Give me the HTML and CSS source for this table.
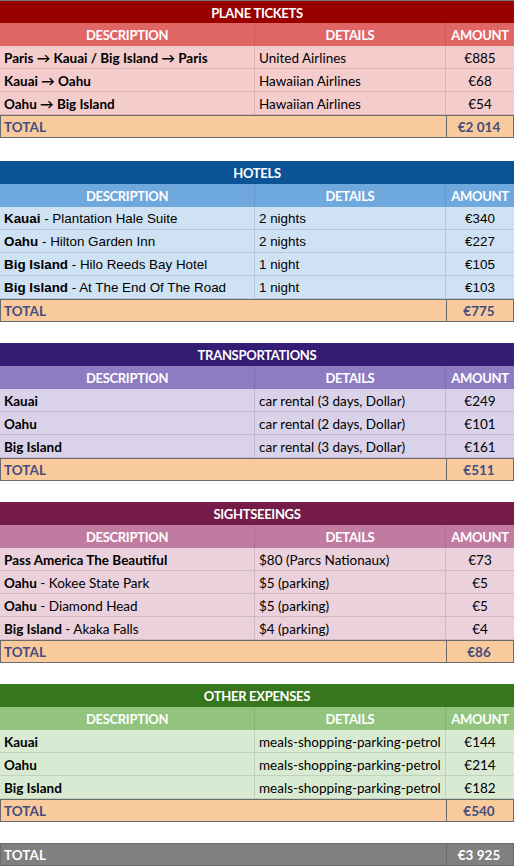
FILE: index.html
```html
<!DOCTYPE html>
<html>
<head>
<meta charset="utf-8">
<link rel="stylesheet" href="styles.css">
</head>
<body>
<main class="page">
  <section class="sheet plane">
    <div class="title">PLANE TICKETS</div>
    <div class="row head"><div class="c">DESCRIPTION</div><div class="c">DETAILS</div><div class="c">AMOUNT</div></div>
    <div class="row data"><div class="c"><b>Paris → Kauai / Big Island → Paris</b></div><div class="c">United Airlines</div><div class="c amt">€885</div></div>
    <div class="row data"><div class="c"><b>Kauai → Oahu</b></div><div class="c">Hawaiian Airlines</div><div class="c amt">€68</div></div>
    <div class="row data"><div class="c"><b>Oahu → Big Island</b></div><div class="c">Hawaiian Airlines</div><div class="c amt">€54</div></div>
    <div class="row total"><div class="c lbl">TOTAL</div><div class="c amt">€2 014</div></div>
  </section>

  <section class="sheet hotels">
    <div class="title">HOTELS</div>
    <div class="row head"><div class="c">DESCRIPTION</div><div class="c">DETAILS</div><div class="c">AMOUNT</div></div>
    <div class="row data arial"><div class="c"><b>Kauai</b> - Plantation Hale Suite</div><div class="c">2 nights</div><div class="c amt">€340</div></div>
    <div class="row data arial"><div class="c"><b>Oahu</b> - Hilton Garden Inn</div><div class="c">2 nights</div><div class="c amt">€227</div></div>
    <div class="row data arial"><div class="c"><b>Big Island</b> - Hilo Reeds Bay Hotel</div><div class="c">1 night</div><div class="c amt">€105</div></div>
    <div class="row data arial"><div class="c"><b>Big Island</b> - At The End Of The Road</div><div class="c">1 night</div><div class="c amt">€103</div></div>
    <div class="row total"><div class="c lbl">TOTAL</div><div class="c amt">€775</div></div>
  </section>

  <section class="sheet transport">
    <div class="title">TRANSPORTATIONS</div>
    <div class="row head"><div class="c">DESCRIPTION</div><div class="c">DETAILS</div><div class="c">AMOUNT</div></div>
    <div class="row data"><div class="c"><b>Kauai</b></div><div class="c">car rental (3 days, Dollar)</div><div class="c amt">€249</div></div>
    <div class="row data"><div class="c"><b>Oahu</b></div><div class="c">car rental (2 days, Dollar)</div><div class="c amt">€101</div></div>
    <div class="row data"><div class="c"><b>Big Island</b></div><div class="c">car rental (3 days, Dollar)</div><div class="c amt">€161</div></div>
    <div class="row total"><div class="c lbl">TOTAL</div><div class="c amt">€511</div></div>
  </section>

  <section class="sheet sight">
    <div class="title">SIGHTSEEINGS</div>
    <div class="row head"><div class="c">DESCRIPTION</div><div class="c">DETAILS</div><div class="c">AMOUNT</div></div>
    <div class="row data"><div class="c"><b>Pass America The Beautiful</b></div><div class="c">$80 (Parcs Nationaux)</div><div class="c amt">€73</div></div>
    <div class="row data"><div class="c"><b>Oahu</b> - Kokee State Park</div><div class="c">$5 (parking)</div><div class="c amt">€5</div></div>
    <div class="row data"><div class="c"><b>Oahu</b> - Diamond Head</div><div class="c">$5 (parking)</div><div class="c amt">€5</div></div>
    <div class="row data"><div class="c"><b>Big Island</b> - Akaka Falls</div><div class="c">$4 (parking)</div><div class="c amt">€4</div></div>
    <div class="row total"><div class="c lbl">TOTAL</div><div class="c amt">€86</div></div>
  </section>

  <section class="sheet other">
    <div class="title">OTHER EXPENSES</div>
    <div class="row head"><div class="c">DESCRIPTION</div><div class="c">DETAILS</div><div class="c">AMOUNT</div></div>
    <div class="row data"><div class="c"><b>Kauai</b></div><div class="c">meals-shopping-parking-petrol</div><div class="c amt">€144</div></div>
    <div class="row data"><div class="c"><b>Oahu</b></div><div class="c">meals-shopping-parking-petrol</div><div class="c amt">€214</div></div>
    <div class="row data"><div class="c"><b>Big Island</b></div><div class="c">meals-shopping-parking-petrol</div><div class="c amt">€182</div></div>
    <div class="row total"><div class="c lbl">TOTAL</div><div class="c amt">€540</div></div>
  </section>

  <section class="sheet grand">
    <div class="row total"><div class="c lbl">TOTAL</div><div class="c amt">€3 925</div></div>
  </section>
</main>
</body>
</html>
```

FILE: styles.css
```css
* { box-sizing: border-box; }
html, body { margin: 0; padding: 0; background: #ffffff; }
body {
  font-family: "Lato", "Liberation Sans", sans-serif;
  font-size: 13.5px;
  color: #000;
}
.page {
  width: 514px;
  display: flex;
  flex-direction: column;
  gap: 21px;
}
.sheet:first-child { margin-bottom: 2px; }
.sheet:first-child .title { border-top: 1px solid #7a7a7a; }

.title {
  height: 23px;
  line-height: 24px;
  text-align: center;
  color: #fff;
  font-weight: 700;
  font-size: 13px;
  letter-spacing: -0.3px;
}
.row {
  display: grid;
  grid-template-columns: 255px 191px 68px;
  height: 23px;
}
.c {
  padding: 0 4px;
  line-height: 23px;
  white-space: nowrap;
  overflow: hidden;
  border-right: 1px solid var(--line);
  border-bottom: 1px solid var(--line);
}
.data .c { line-height: 24px; }
.c:last-child { border-right: 0; }
.head .c {
  text-align: center;
  color: #fff;
  font-weight: 700;
  font-size: 13px;
  letter-spacing: -0.3px;
  line-height: 24px;
  border-color: var(--hline);
  border-bottom: 0;
  padding: 0 2px;
}
.data .c { font-size: 13.5px; }
.data b { font-weight: 700; }
.c.amt { text-align: center; }
.arial .c { font-family: "Liberation Sans", Arial, sans-serif; font-size: 13.4px; }

.total {
  grid-template-columns: 445px 67px;
  background: #f9cb9c;
  border: 1px solid #6a6a6a;
}
.total .c {
  border: 0;
  line-height: 22px;
  color: #444c80;
  font-weight: 700;
  font-size: 13.5px;
}
.total .c.lbl { padding-left: 3px; }
.total .c.amt { border-left: 1px solid #6a6a6a; padding-right: 6px; }

.plane .title { background: #990000; }
.plane .head { background: #e06666; }
.plane .data { background: #f4cccc; }
.plane { --line: #dbb5b5; --hline: #cf5c5c; }

.hotels .title { background: #0b5394; }
.hotels .head { background: #6fa8dc; }
.hotels .data { background: #cfe2f3; }
.hotels { --line: #b5c8da; --hline: #649acb; }

.transport .title { background: #351c75; }
.transport .head { background: #8e7cc3; }
.transport .data { background: #d9d2e9; }
.transport { --line: #c1b9d2; --hline: #8071b4; }

.sight .title { background: #741b47; }
.sight .head { background: #c27ba0; }
.sight .data { background: #ead1dc; }
.sight { --line: #d1b9c4; --hline: #b06f92; }

.other .title { background: #38761d; }
.other .head { background: #93c47d; }
.other .data { background: #d9ead3; }
.other { --line: #c1d2bb; --hline: #86b372; }

.grand .total { background: #808080; border-color: #6a6a6a; }
.grand .total .c { color: #fff; }
```
